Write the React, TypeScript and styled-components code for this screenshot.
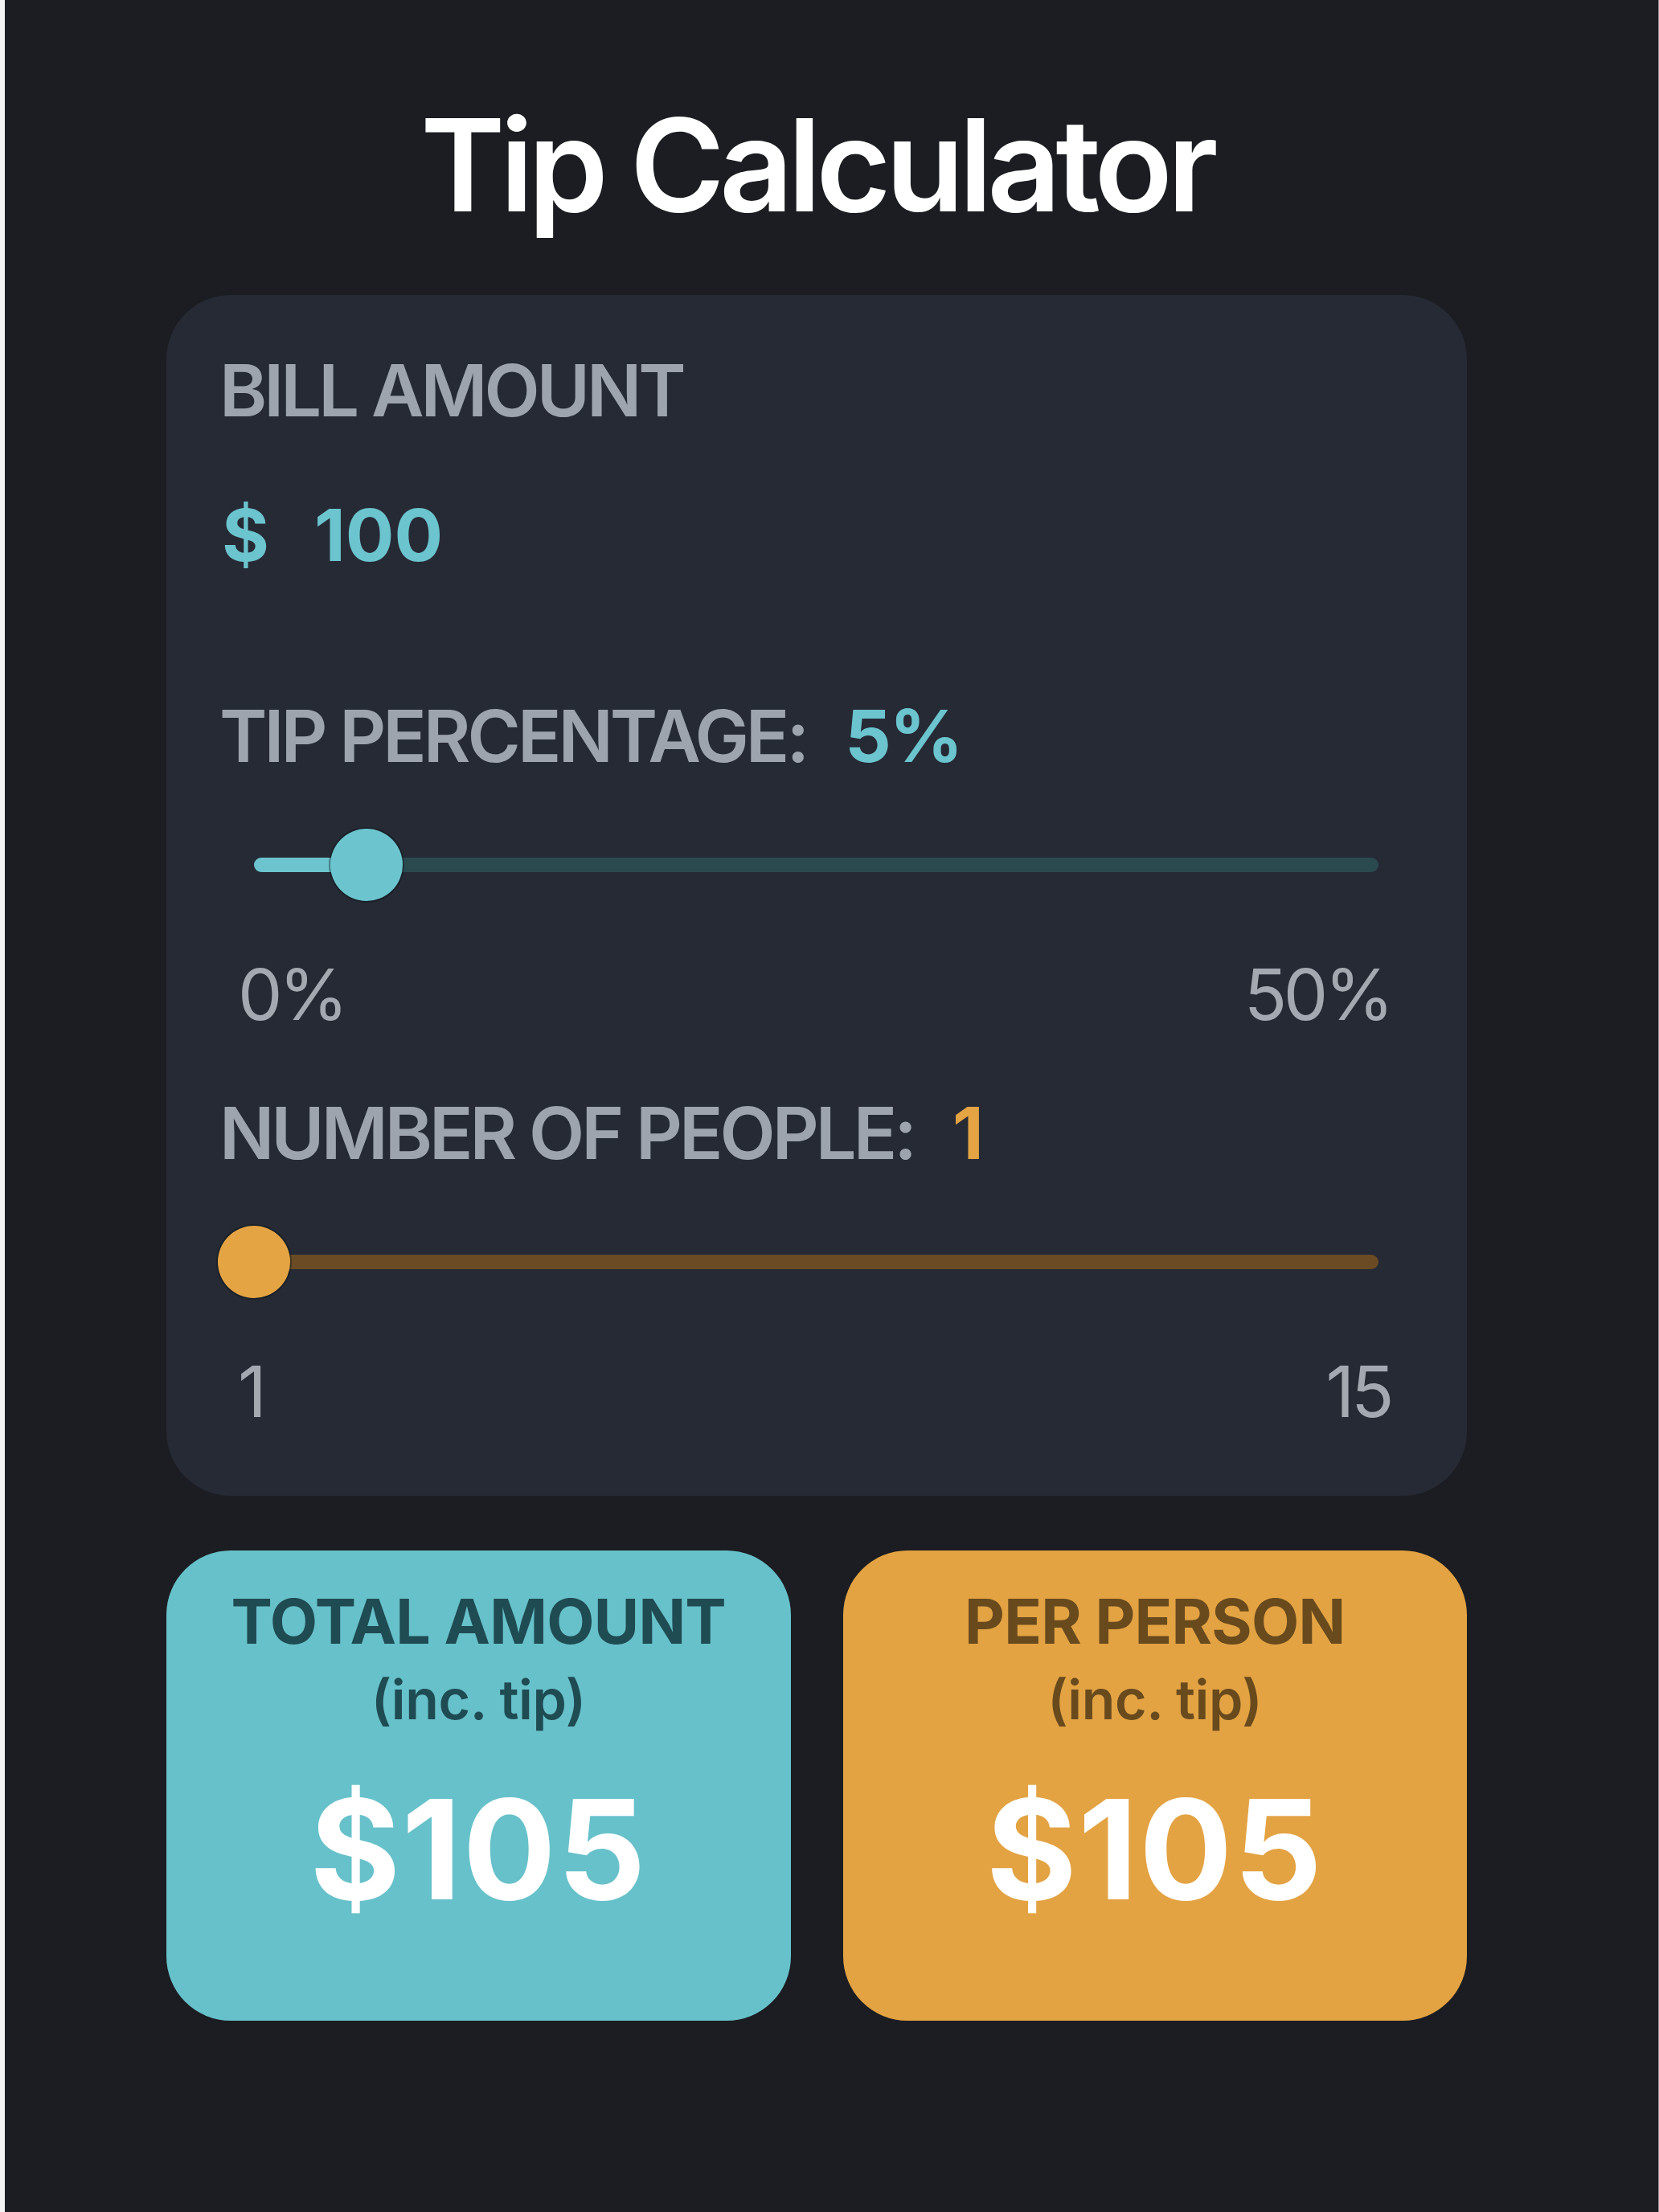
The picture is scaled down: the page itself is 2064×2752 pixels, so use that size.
import styled, { createGlobalStyle } from "styled-components";

const GlobalStyle = createGlobalStyle`
  html, body {
    margin: 0;
    padding: 0;
    background: #1b1d22;
  }
  body {
    font-family: Inter, "Noto Sans", sans-serif;
  }
`;

const teal = "#6bc4ce";
const orange = "#e5a443";

const Page = styled.div`
  box-sizing: border-box;
  width: 2064px;
  min-height: 2752px;
  background: #1b1d22;
  border-left: 6px solid #f3f3f3;
  border-right: 1px solid #8c8d90;
  padding: 125px 238px 0 201px;
  display: flex;
  flex-direction: column;
`;

const Title = styled.h1`
  margin: 0 0 82px;
  font-size: 160px;
  line-height: 1;
  font-weight: 600;
  letter-spacing: -0.042em;
  color: #ffffff;
  text-align: center;
`;

const Card = styled.div`
  background: #262a35;
  border-radius: 80px;
  padding: 74px 69px 86px 66px;
  display: flex;
  flex-direction: column;
`;

const Label = styled.div<{ $gap?: number }>`
  font-size: 90px;
  line-height: 1;
  font-weight: 600;
  letter-spacing: -0.044em;
  color: #9ea4ad;
  margin-top: ${(p) => p.$gap ?? 0}px;
  display: flex;
  align-items: baseline;
`;

const LabelValue = styled.span<{ $color: string }>`
  margin-left: 48px;
  font-weight: 700;
  letter-spacing: -0.02em;
  color: ${(p) => p.$color};
`;

const BillRow = styled.div`
  margin-top: 90px;
  padding-left: 3px;
  display: flex;
  align-items: baseline;
  gap: 56px;
  font-size: 90px;
  line-height: 1;
  font-weight: 700;
  color: ${teal};
`;

const SliderWrap = styled.div`
  margin-top: 70px;
  padding: 0 41px 0 43px;
`;

const Track = styled.div<{ $bg: string }>`
  position: relative;
  height: 90px;
  display: flex;
  align-items: center;

  &::before {
    content: "";
    display: block;
    width: 100%;
    height: 18px;
    border-radius: 9px;
    background: ${(p) => p.$bg};
  }
`;

const Fill = styled.div<{ $color: string }>`
  position: absolute;
  left: 0;
  top: 36px;
  height: 18px;
  border-radius: 9px;
  background: ${(p) => p.$color};
`;

const Thumb = styled.div<{ $color: string }>`
  position: absolute;
  top: 0;
  width: 90px;
  height: 90px;
  margin-left: -45px;
  border-radius: 50%;
  background: ${(p) => p.$color};
  box-shadow: 0 0 0 2px rgba(10, 20, 25, 0.4);
`;

const Ticks = styled.div<{ $gap: number }>`
  margin-top: ${(p) => p.$gap}px;
  padding: 0 26px 0 23px;
  display: flex;
  justify-content: space-between;
  font-size: 88px;
  line-height: 1;
  font-weight: 400;
  letter-spacing: -0.05em;
  color: #a4a9b1;
`;

const Results = styled.div`
  margin-top: 68px;
  display: grid;
  grid-template-columns: 1fr 1fr;
  gap: 65px;
`;

const ResultBox = styled.div<{ $bg: string; $ink: string }>`
  height: 585px;
  box-sizing: border-box;
  border-radius: 80px;
  background: ${(p) => p.$bg};
  color: ${(p) => p.$ink};
  padding-top: 50px;
  display: flex;
  flex-direction: column;
  align-items: center;
`;

const ResultTitle = styled.div`
  font-size: 77px;
  line-height: 1;
  font-weight: 700;
  letter-spacing: -0.01em;
`;

const ResultSub = styled.div`
  margin-top: 24px;
  font-size: 68px;
  line-height: 1;
  font-weight: 600;
  letter-spacing: -0.005em;
`;

const ResultValue = styled.div`
  margin-top: 66px;
  font-size: 172px;
  line-height: 1;
  font-weight: 700;
  letter-spacing: 0.01em;
  color: #ffffff;
`;

type SliderProps = {
  value: number;
  min: number;
  max: number;
  color: string;
  trackColor: string;
  showFill?: boolean;
};

const Slider = ({ value, min, max, color, trackColor, showFill }: SliderProps) => {
  const pct = ((value - min) / (max - min)) * 100;
  return (
    <SliderWrap>
      <Track $bg={trackColor}>
        {showFill && <Fill $color={color} style={{ width: `${pct}%` }} />}
        <Thumb $color={color} style={{ left: `${pct}%` }} />
      </Track>
    </SliderWrap>
  );
};

const App = () => {
  const bill = 100;
  const tip = 5;
  const people = 1;
  const total = bill + (bill * tip) / 100;
  const perPerson = total / people;

  return (
    <>
      <GlobalStyle />
      <Page>
        <Title>Tip Calculator</Title>
        <Card>
          <Label>BILL AMOUNT</Label>
          <BillRow>
            <span>$</span>
            <span>{bill}</span>
          </BillRow>

          <Label $gap={160}>
            TIP PERCENTAGE:
            <LabelValue $color={teal}>{tip}%</LabelValue>
          </Label>
          <Slider value={tip} min={0} max={50} color={teal} trackColor="#2b4a50" showFill />
          <Ticks $gap={72}>
            <span>0%</span>
            <span>50%</span>
          </Ticks>

          <Label $gap={84}>
            NUMBER OF PEOPLE:
            <LabelValue $color={orange}>{people}</LabelValue>
          </Label>
          <Slider value={people} min={1} max={15} color={orange} trackColor="#6a4b24" />
          <Ticks $gap={72}>
            <span>1</span>
            <span>15</span>
          </Ticks>
        </Card>

        <Results>
          <ResultBox $bg="#67c1ca" $ink="#1f4b52">
            <ResultTitle>TOTAL AMOUNT</ResultTitle>
            <ResultSub>(inc. tip)</ResultSub>
            <ResultValue>${total}</ResultValue>
          </ResultBox>
          <ResultBox $bg="#e3a343" $ink="#684a1d">
            <ResultTitle>PER PERSON</ResultTitle>
            <ResultSub>(inc. tip)</ResultSub>
            <ResultValue>${perPerson}</ResultValue>
          </ResultBox>
        </Results>
      </Page>
    </>
  );
};

export default App;
